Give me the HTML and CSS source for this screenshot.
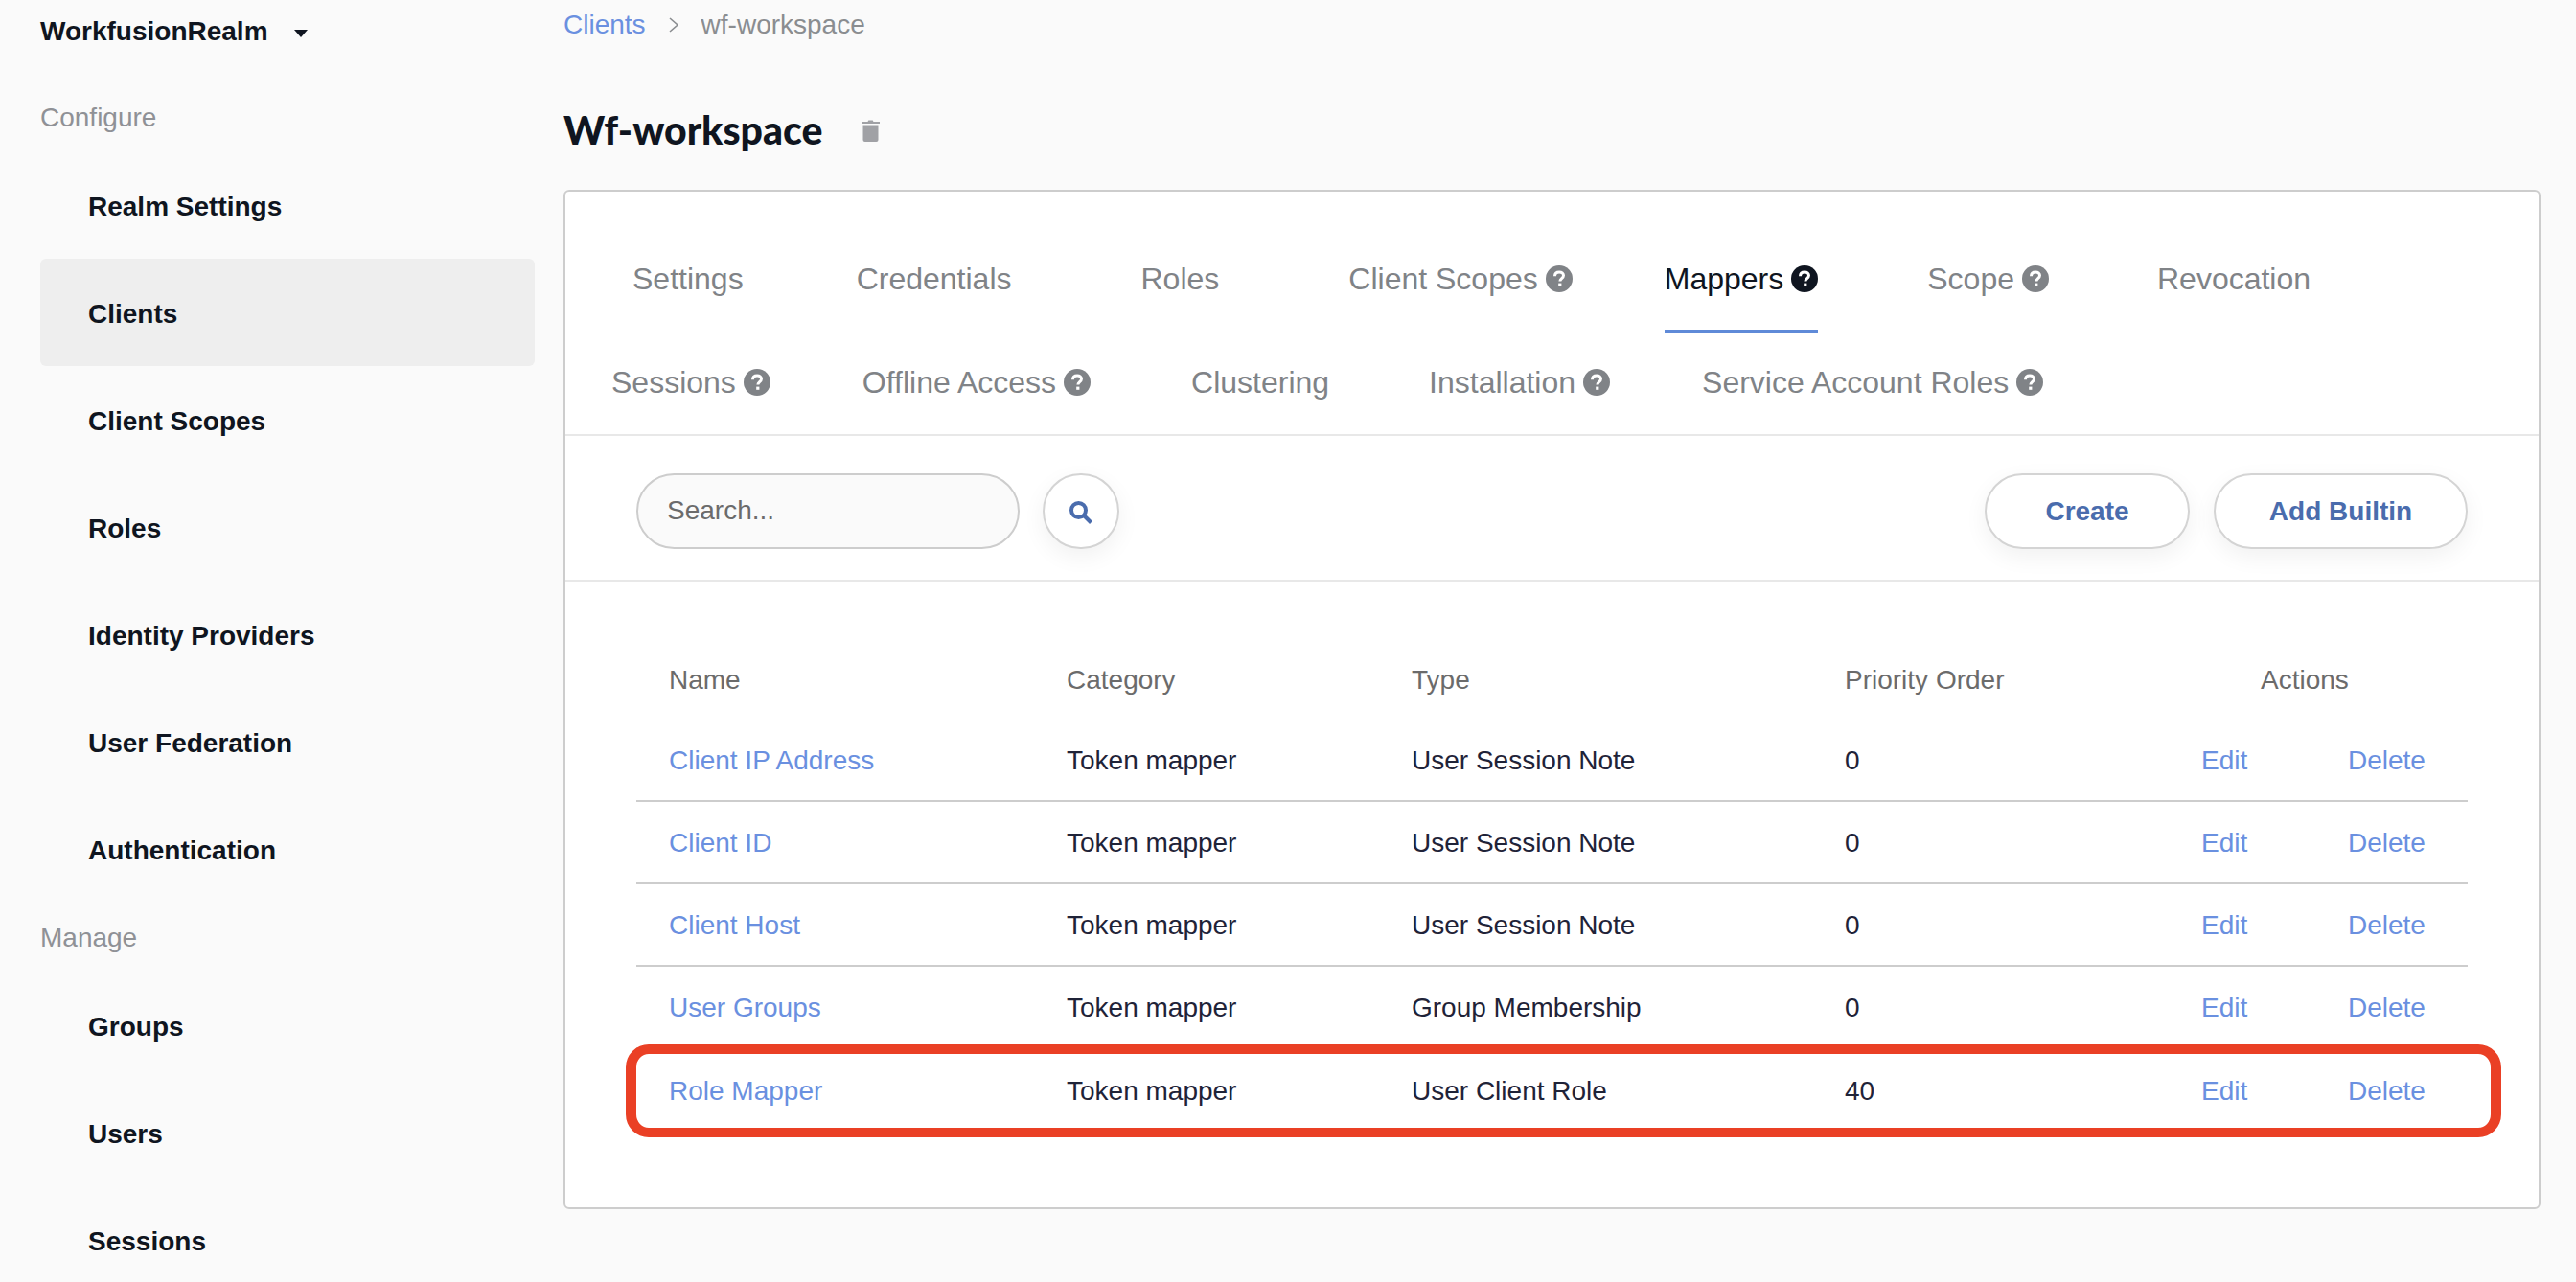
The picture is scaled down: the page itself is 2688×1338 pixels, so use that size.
FILE: index.html
```html
<!DOCTYPE html>
<html>

<head>
  <meta charset="UTF-8">
  <title>Wf-workspace</title>
  <link rel="stylesheet" href="styles.css">
</head>

<body>
  <svg class="sprites" xmlns="http://www.w3.org/2000/svg">
    <symbol id="help" viewBox="0 0 28 28">
      <circle cx="14" cy="14" r="14" fill="currentColor" />
      <path d="M9.5 11.2c0-2.700 2-4.200 4.600-4.200 2.500 0 4.400 1.400 4.400 3.600 0 3-3.600 3.200-3.600 5.900" fill="none" stroke="#fff" stroke-width="3" />
      <rect x="13.200" y="18.600" width="3.200" height="3.200" fill="#fff" />
    </symbol>
  </svg>

  <div class="layout">
    <aside class="sidebar">
      <div class="realm">WorkfusionRealm <span class="caret"></span></div>

      <h3 class="nav-head first">Configure</h3>
      <ul class="nav">
        <li>Realm Settings</li>
        <li class="active">Clients</li>
        <li>Client Scopes</li>
        <li>Roles</li>
        <li>Identity Providers</li>
        <li>User Federation</li>
        <li>Authentication</li>
      </ul>

      <h3 class="nav-head">Manage</h3>
      <ul class="nav">
        <li>Groups</li>
        <li>Users</li>
        <li>Sessions</li>
      </ul>
    </aside>

    <main class="content">
      <div class="crumbs">
        <a href="#">Clients</a>
        <svg class="crumb-sep" viewBox="0 0 10 16" width="10" height="16"><path d="M1 1l8 7-8 7" fill="none" stroke="#8a8d90" stroke-width="1.6" /></svg>
        <span>wf-workspace</span>
      </div>

      <div class="page-title">
        <h1>Wf-workspace</h1>
        <svg class="trash" viewBox="0 0 19 24" width="19" height="24">
          <path d="M0 3h6.500l.8-1.500h4.400l.8 1.500H19v2H0z" fill="#a0a1a5" />
          <path d="M1.500 6.500h16v15.500a2 2 0 0 1-2 2h-12a2 2 0 0 1-2-2z" fill="#a0a1a5" />
        </svg>
      </div>

      <section class="panel">
        <nav class="tabs">
          <div class="tab-row row-one">
            <a class="tab t-settings">Settings</a>
            <a class="tab t-credentials">Credentials</a>
            <a class="tab t-roles">Roles</a>
            <a class="tab t-scopes">Client Scopes <svg class="help"><use href="#help" /></svg></a>
            <a class="tab t-mappers active">Mappers <svg class="help"><use href="#help" /></svg></a>
            <a class="tab t-scope">Scope <svg class="help"><use href="#help" /></svg></a>
            <a class="tab">Revocation</a>
          </div>
          <div class="tab-row row-two">
            <a class="tab t-sessions">Sessions <svg class="help"><use href="#help" /></svg></a>
            <a class="tab t-offline">Offline Access <svg class="help"><use href="#help" /></svg></a>
            <a class="tab t-clustering">Clustering</a>
            <a class="tab t-install">Installation <svg class="help"><use href="#help" /></svg></a>
            <a class="tab">Service Account Roles <svg class="help"><use href="#help" /></svg></a>
          </div>
        </nav>

        <div class="toolbar">
          <input class="search" type="text" placeholder="Search...">
          <button class="btn btn-icon">
            <svg viewBox="0 0 24 24" width="24" height="24">
              <circle cx="9.500" cy="9.500" r="7.500" fill="none" stroke="#4a6cad" stroke-width="4" />
              <path d="M14.500 14.500L22.500 22.500" stroke="#4a6cad" stroke-width="4" />
            </svg>
          </button>
          <span class="spacer"></span>
          <button class="btn btn-create">Create</button>
          <button class="btn btn-builtin">Add Builtin</button>
        </div>

        <div class="table-wrap">
          <table class="mappers">
            <colgroup>
              <col class="c-name">
              <col class="c-cat">
              <col class="c-type">
              <col class="c-prio">
              <col class="c-edit">
              <col class="c-del">
            </colgroup>
            <thead>
              <tr>
                <th>Name</th>
                <th>Category</th>
                <th>Type</th>
                <th>Priority Order</th>
                <th class="th-actions" colspan="2">Actions</th>
              </tr>
            </thead>
            <tbody>
              <tr>
                <td><a href="#">Client IP Address</a></td>
                <td>Token mapper</td>
                <td>User Session Note</td>
                <td>0</td>
                <td><a href="#">Edit</a></td>
                <td><a href="#">Delete</a></td>
              </tr>
              <tr>
                <td><a href="#">Client ID</a></td>
                <td>Token mapper</td>
                <td>User Session Note</td>
                <td>0</td>
                <td><a href="#">Edit</a></td>
                <td><a href="#">Delete</a></td>
              </tr>
              <tr>
                <td><a href="#">Client Host</a></td>
                <td>Token mapper</td>
                <td>User Session Note</td>
                <td>0</td>
                <td><a href="#">Edit</a></td>
                <td><a href="#">Delete</a></td>
              </tr>
              <tr>
                <td><a href="#">User Groups</a></td>
                <td>Token mapper</td>
                <td>Group Membership</td>
                <td>0</td>
                <td><a href="#">Edit</a></td>
                <td><a href="#">Delete</a></td>
              </tr>
              <tr>
                <td><a href="#">Role Mapper</a></td>
                <td>Token mapper</td>
                <td>User Client Role</td>
                <td>40</td>
                <td><a href="#">Edit</a></td>
                <td><a href="#">Delete</a></td>
              </tr>
            </tbody>
          </table>
          <div class="highlight"></div>
        </div>
      </section>
    </main>
  </div>
</body>

</html>
```

FILE: styles.css
```css
html,
body {
  margin: 0;
  height: 100%;
}

body {
  background-color: #fafafa;
  color: #0f1520;
  font-family: "Liberation Sans", Arial, sans-serif;
  font-size: 28px;
  overflow: hidden;
}

a {
  color: #6a90e0;
  text-decoration: none;
}

.sprites {
  display: none;
}

.layout {
  display: flex;
  height: 1338px;
  overflow: hidden;
}

/* sidebar */
.sidebar {
  width: 588px;
  flex-shrink: 0;
  box-sizing: border-box;
  padding: 0 30px 0 42px;
}

.realm {
  display: flex;
  align-items: center;
  height: 66px;
  font-weight: bold;
}

.caret {
  width: 0;
  height: 0;
  margin: 4px 0 0 27px;
  border-left: 7px solid transparent;
  border-right: 7px solid transparent;
  border-top: 8px solid #0f1520;
}

.nav-head {
  margin: 18px 0 0;
  height: 38px;
  line-height: 38px;
  font-size: 28px;
  font-weight: normal;
  color: #8f9196;
}

.nav-head.first {
  margin-top: 38px;
}

.nav {
  list-style: none;
  margin: 16px 0 0;
  padding: 0;
}

.nav li {
  height: 110px;
  padding-top: 2px;
  line-height: 111px;
  padding-left: 50px;
  font-weight: bold;
  border-radius: 6px;
}

.nav li.active {
  background-color: #eeeeee;
}

/* main column */
.content {
  flex: 1;
  padding-right: 37px;
}

.crumbs {
  display: flex;
  align-items: center;
  gap: 24px;
  height: 52px;
  color: #8a8d90;
}

.page-title {
  display: flex;
  align-items: center;
  gap: 41px;
  height: 84px;
  margin-top: 42px;
  margin-bottom: 20px;
}

.page-title h1 {
  margin: 0 0 2px;
  font-family: Lato, "Liberation Sans", sans-serif;
  font-size: 41px;
  font-weight: 900;
}

.panel {
  box-sizing: border-box;
  height: 1064px;
  background-color: #fff;
  border: 2px solid #cdcdcd;
  border-radius: 6px;
}

/* tabs */
.tabs {
  height: 255px;
  box-sizing: border-box;
  border-bottom: 2px solid #e8e8e8;
  padding-top: 65px;
}

.tab-row {
  display: flex;
  align-items: flex-start;
}

.row-one {
  height: 108px;
  padding-left: 70px;
}

.row-two {
  padding-left: 48px;
}

.tab {
  display: flex;
  align-items: center;
  gap: 8px;
  height: 52px;
  font-size: 32px;
  color: #808387;
}

.help {
  width: 28px;
  height: 28px;
}

.tab.active {
  box-sizing: border-box;
  height: 83px;
  padding-bottom: 27px;
  color: #0f1520;
  border-bottom: 4px solid #5f8ad8;
}

.t-settings { margin-right: 118px; }
.t-credentials { margin-right: 135px; }
.t-roles { margin-right: 135px; }
.t-scopes { margin-right: 96px; }
.t-mappers { margin-right: 114px; }
.t-scope { margin-right: 113px; }
.t-sessions { margin-right: 96px; }
.t-offline { margin-right: 105px; }
.t-clustering { margin-right: 104px; }
.t-install { margin-right: 96px; }

/* search and buttons */
.toolbar {
  display: flex;
  align-items: center;
  height: 152px;
  box-sizing: border-box;
  padding: 6px 74px 0;
  border-bottom: 2px solid #e8e8e8;
}

.search {
  box-sizing: border-box;
  width: 400px;
  height: 79px;
  padding: 0 30px;
  background-color: #fafafa;
  border: 2px solid #cdcdcd;
  border-radius: 40px;
  font-family: inherit;
  font-size: 28px;
  color: #6b6b6b;
}

.search::placeholder {
  color: #6b6b6b;
  opacity: 1;
}

.btn {
  box-sizing: border-box;
  height: 79px;
  padding-top: 3px;
  background-color: #fff;
  border: 2px solid #d4d4d4;
  border-radius: 40px;
  box-shadow: 0 8px 24px rgba(0, 0, 0, 0.06);
  font-family: inherit;
  font-size: 28px;
  font-weight: bold;
  color: #4a6cad;
}

.btn-icon {
  display: flex;
  align-items: center;
  justify-content: center;
  width: 80px;
  margin-left: 24px;
  padding: 4px 0 0;
}

.spacer {
  flex: 1;
}

.btn-create {
  width: 214px;
}

.btn-builtin {
  width: 265px;
  margin-left: 25px;
}

/* table */
.table-wrap {
  position: relative;
  padding: 62px 74px 0;
}

.mappers {
  width: 1911px;
  border-collapse: collapse;
  table-layout: fixed;
}

.c-name { width: 449px; }
.c-cat { width: 360px; }
.c-type { width: 452px; }
.c-prio { width: 372px; }
.c-edit { width: 153px; }
.c-del { width: 125px; }

.mappers th,
.mappers td {
  padding: 0;
  text-align: left;
}

.mappers th {
  height: 81px;
  font-weight: normal;
  color: #6b6b6b;
}

.mappers td {
  box-sizing: border-box;
  height: 86px;
  padding-top: 2px;
  color: #1f2338;
}

.mappers tbody tr {
  border-bottom: 2px solid #cdcdcd;
}

.mappers tbody tr:last-child {
  border-bottom: none;
}

.mappers th:first-child,
.mappers td:first-child {
  padding-left: 34px;
}

.mappers .th-actions {
  padding-left: 62px;
}

.highlight {
  position: absolute;
  left: 63px;
  right: 39px;
  bottom: -7px;
  height: 97px;
  box-sizing: border-box;
  border: 10px solid #ea4025;
  border-left-width: 11px;
  border-right-width: 11px;
  border-radius: 24px;
}
```
